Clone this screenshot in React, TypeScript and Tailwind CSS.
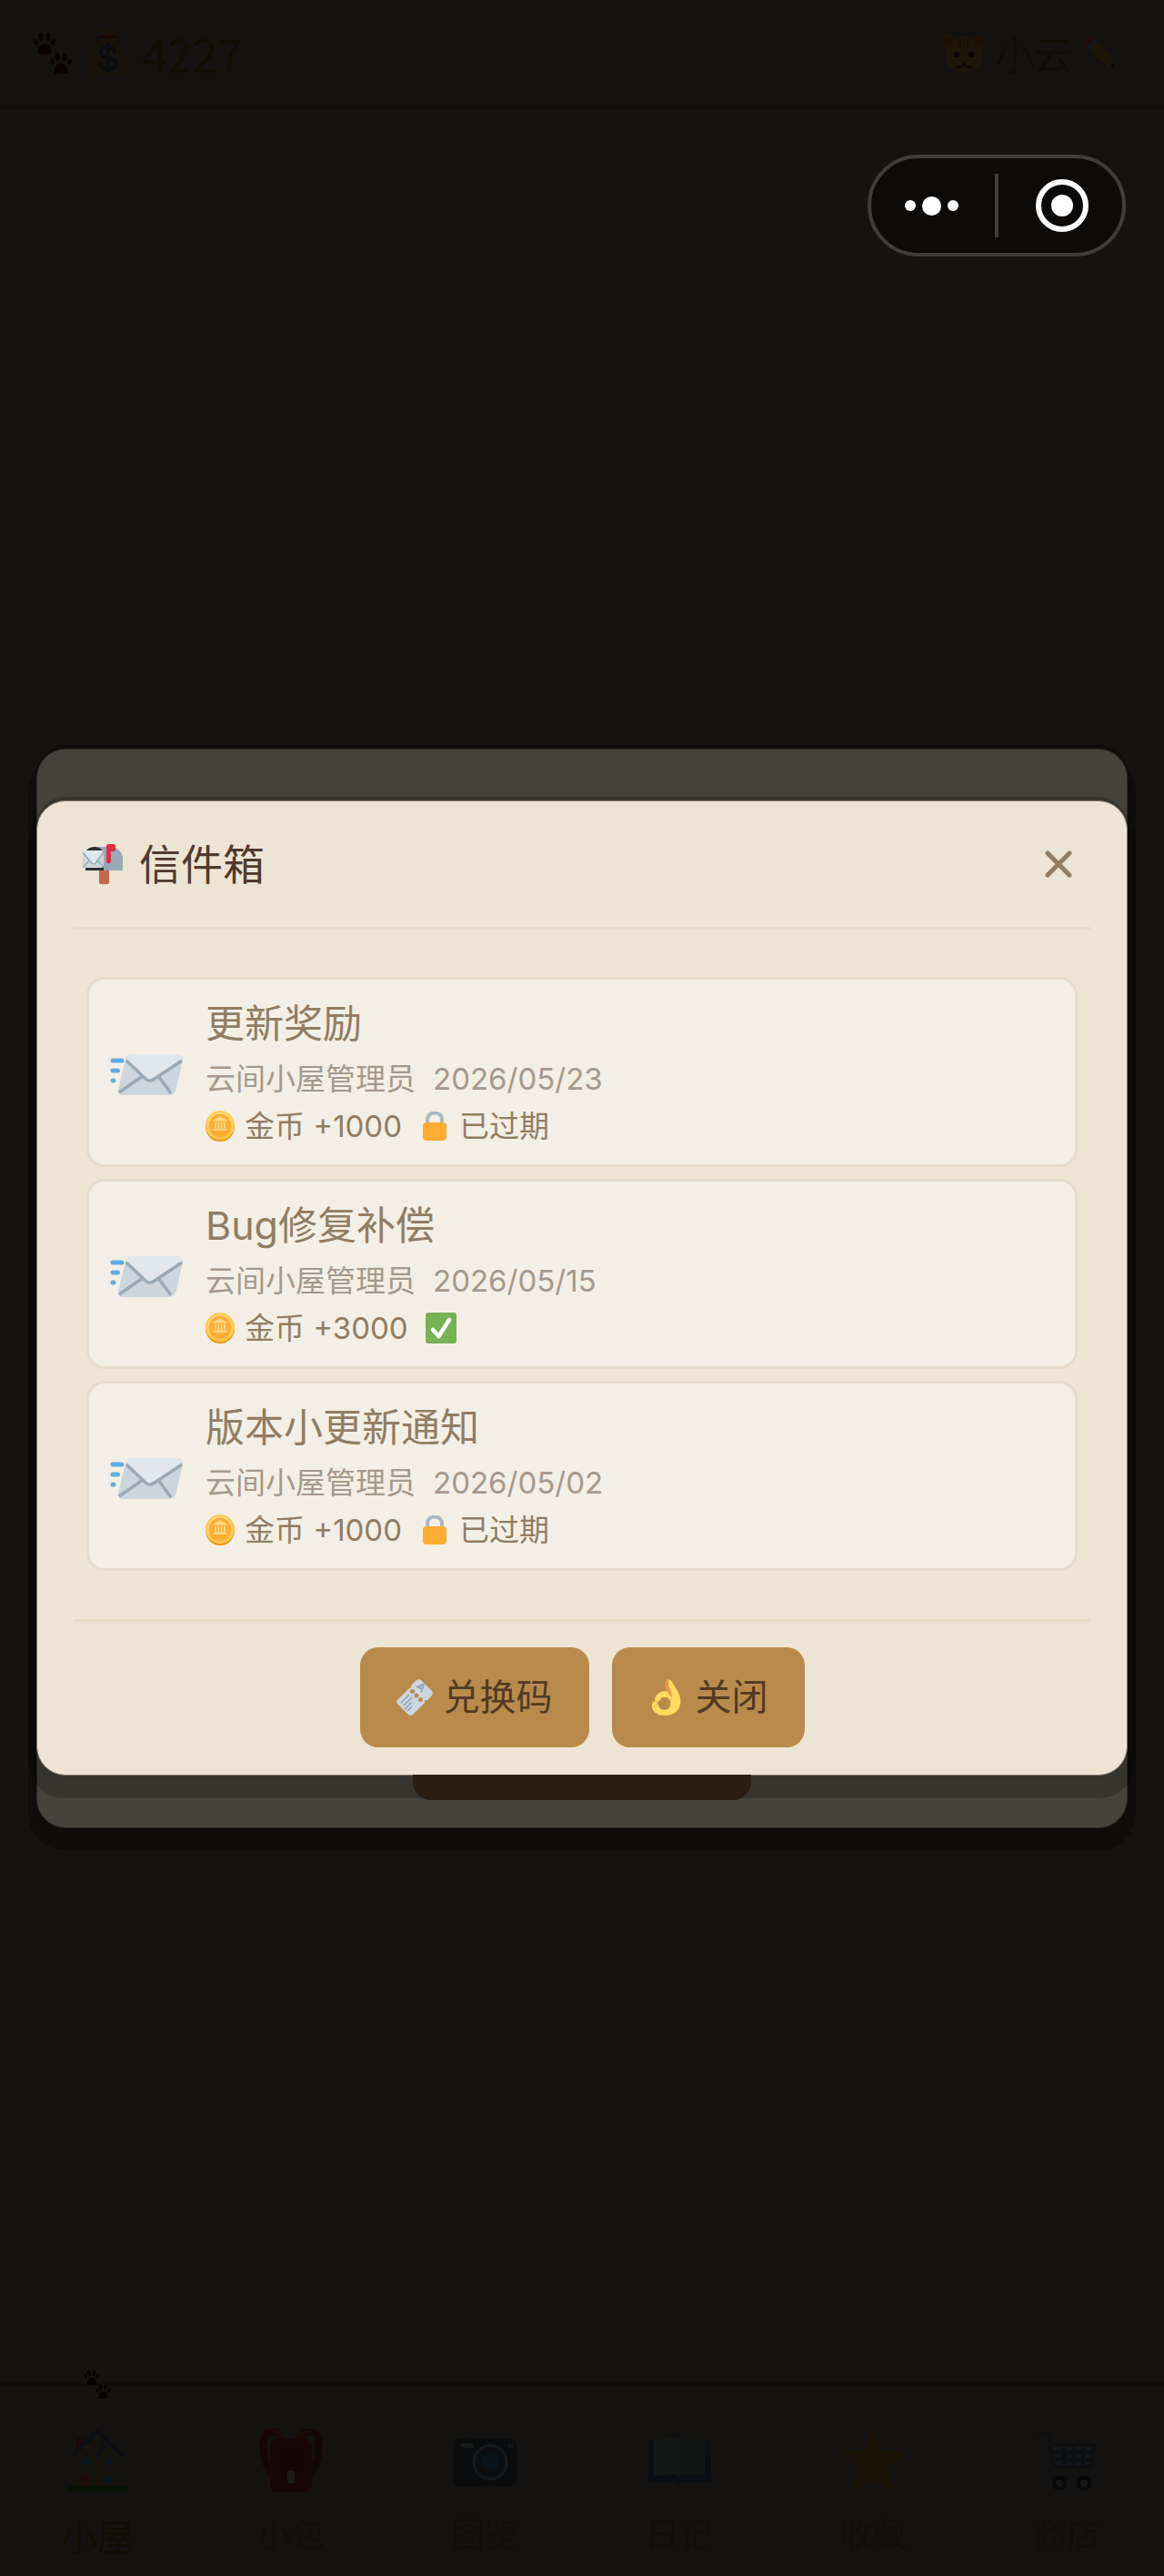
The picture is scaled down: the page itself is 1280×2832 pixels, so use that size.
import React from "react";

function Paws({ className }: { className: string }) {
  return (
    <svg viewBox="0 0 44 46" className={className} fill="currentColor" aria-hidden="true">
      {[
        [0, 0],
        [18, 22],
      ].map(([x, y]) => (
        <g key={x} transform={`translate(${x} ${y})`}>
          <ellipse cx="3.5" cy="11" rx="2.2" ry="3.2" transform="rotate(-15 3.5 11)" />
          <ellipse cx="9" cy="5.5" rx="2.7" ry="4.4" transform="rotate(-5 9 5.5)" />
          <ellipse cx="17" cy="5.5" rx="2.7" ry="4.4" transform="rotate(5 17 5.5)" />
          <ellipse cx="22.5" cy="11" rx="2.2" ry="3.2" transform="rotate(15 22.5 11)" />
          <path d="M6 24c-1-7 2-11 7-11s8 4 7 11c-2 1-12 1-14 0z" />
        </g>
      ))}
    </svg>
  );
}

function MoneyBag() {
  return (
    <svg viewBox="0 0 48 54" className="h-[54px] w-12" aria-hidden="true">
      <path d="M15 10 14 1l5 2 5-3 5 3 5-2-1 9c5 8 14 18 14 30 0 8-5 14-12 14H13C6 54 1 48 1 40 1 28 11 18 15 10z" fill="#17130a" />
      <path d="M15 8h19v3H15z" fill="#1a0907" />
      <path d="M24.500 18v29M32 26c-1-4-4-5-8-5-5 0-7 3-7 6 0 8 16 4 16 12 0 4-4 6-8 6-5 0-8-2-9-6" fill="none" stroke="#0a0d0d" strokeWidth="4" strokeLinecap="round" />
    </svg>
  );
}

function Cat() {
  return (
    <svg viewBox="0 0 44 44" className="size-11" aria-hidden="true">
      <path d="M1 0 14 6c5-2 11-2 16 0L43 0c1 8 1 14 0 20 2 13-8 24-21 24S-1 33 1 20C0 14 0 8 1 0z" fill="#1d1507" />
      <path d="M2 3 10 8l-6 7zM42 3l-8 5 6 7z" fill="#220e06" />
      <path d="M18 7v9M22 6v10M26 7v9" stroke="#160e05" strokeWidth="2" />
      <circle cx="14" cy="24" r="3" fill="#070503" />
      <circle cx="30" cy="24" r="3" fill="#070503" />
      <path d="M19 31h6l-3 3z" fill="#2c0a0a" />
      <path d="M13 37c4 2 7 1 9-3 2 4 5 5 9 3" fill="none" stroke="#0d0804" strokeWidth="2" />
    </svg>
  );
}

function Pencil() {
  return (
    <svg viewBox="0 0 34 34" className="size-[34px]" aria-hidden="true">
      <path d="m6 15 9-10 16 17-8 7z" fill="#1d1607" />
      <path d="M1 9C0 4 5-1 10 1l1 1-9 9z" fill="#230a0c" />
      <path d="m2 11 9-9 4 3-9 10z" fill="#12171a" />
      <path d="m23 29 8-7 2 11z" fill="#1e120d" />
      <path d="m29 31 3-3 1 5z" fill="#040404" />
    </svg>
  );
}

function Mailbox() {
  return (
    <svg viewBox="0 0 44 44" className="size-11" aria-hidden="true">
      <path d="M18 26h11v16c0 1-1 2-2 2h-7c-1 0-2-1-2-2z" fill="#c1694f" />
      <path d="M13 3h18c7 0 13 6 13 13v12c0 .6-.4 1-1 1H13z" fill="#99aab5" />
      <path d="M3 10C3 6 8 3 13 3s10 3 10 9v17H3z" fill="#292f33" />
      <path d="M0 7h20c2 0 3 1 3 2v15c0 1-1 2-3 2H2c-1 0-2 0-2-1z" fill="#ccd6dd" />
      <path d="m0 26 9-10M23 25l-9-9" stroke="#99aab5" strokeWidth="1.500" />
      <path d="M0 7h22l-8 13c-1 2-3 2-4 0L0 9z" fill="#e1e8ed" />
      <path d="m0 9 10 12c1 1 3 1 4 0l9-12" fill="none" stroke="#99aab5" strokeWidth="1.500" />
      <path d="M28 0h6c1 0 2 1 2 2v4c0 1-1 2-2 2h-3v11c0 3-5 3-5 0V2c0-1 1-2 2-2z" fill="#dd2e44" />
    </svg>
  );
}

function FlyingEnvelope() {
  return (
    <svg viewBox="0 -7 80 54" className="h-[54px] w-20 shrink-0" aria-hidden="true">
      <g stroke="#5dade4" strokeWidth="5" strokeLinecap="round">
        <path d="M3 7h10M3 18h5.500M3 29h1" />
      </g>
      <path d="M24 0h50c4 0 6 3 6 6l-7 31c-1 5-4 8-8 8H14c-4 0-6-3-5-7l8-32c1-4 4-6 7-6z" fill="#ccd6dd" />
      <path d="M10 42 36 24M67 43 53 24" stroke="#99aab5" strokeWidth="3.500" />
      <path d="M18 5c1-3 4-5 7-5h48c4 0 7 2 6 6L49 27c-3 3-6 3-9 0z" fill="#e1e8ed" />
      <path d="m18 7 20 19c4 4 7 4 11 1L79 7" fill="none" stroke="#99aab5" strokeWidth="3.500" />
    </svg>
  );
}

function Coin() {
  return (
    <svg viewBox="0 0 32 34" className="h-[34px] w-8" aria-hidden="true">
      <ellipse cx="16" cy="17.500" rx="16" ry="16.500" fill="#f4900c" />
      <ellipse cx="16" cy="16" rx="16" ry="16" fill="#ffcc4d" />
      <ellipse cx="16" cy="16" rx="13" ry="13.500" fill="#ffe8b6" />
      <ellipse cx="16" cy="16.500" rx="12.500" ry="13" fill="#ffac33" />
      <path d="M16 6.500 9 10v1.500h14V10zM10 12.500h2V19h-2zM13.500 12.500h1.700V19h-1.700zM16.800 12.500h1.700V19h-1.700zM20 12.500h2V19h-2zM9 19.500h14V22H9z" fill="#ffd983" />
    </svg>
  );
}

function Lock() {
  return (
    <svg viewBox="-4 0 30 32" className="h-8 w-[30px]" aria-hidden="true">
      <path d="M5 15V9c0-10 16-10 16 0v6" fill="none" stroke="#aab8c2" strokeWidth="4" />
      <rect y="12" width="26" height="20" rx="4" fill="#ffac33" />
    </svg>
  );
}

function Check() {
  return (
    <svg viewBox="0 0 34 34" className="size-[34px]" aria-label="已领取" role="img">
      <rect width="34" height="34" rx="3" fill="#77b255" />
      <path d="m8 19 6.500 7L26 8" fill="none" stroke="#fff" strokeWidth="4.500" strokeLinecap="round" strokeLinejoin="round" />
    </svg>
  );
}

function Ticket() {
  return (
    <svg viewBox="0 0 40 40" className="size-10" aria-hidden="true">
      <path d="m1 23 13-13c1-1 1 0 2 0 1-1 0-2 0-3l6-6c2-1 3-1 5 0l12 12c1 2 1 3 0 5l-5 5c-1 1-2 0-3 0-1 1 0 2 0 3L18 39c-2 1-4 1-5 0L1 27c-1-1-1-3 0-4z" fill="#ccd6dd" />
      <g fill="#b88b4c">
        <circle cx="17.500" cy="13.500" r="2.500" />
        <circle cx="22" cy="18" r="2.500" />
        <circle cx="26.500" cy="22.500" r="2.500" />
      </g>
      <path d="m5 26 9-9M8 29l9-9M9 33l8-8M12 35l5-5" stroke="#8fa6ba" strokeWidth="1.700" />
      <path d="m22 9 8-3.500-3 9M24 8l4.500 4" fill="none" stroke="#8fa6ba" strokeWidth="2" />
    </svg>
  );
}

function OkHand() {
  return (
    <svg viewBox="0 0 40 40" className="size-10" aria-hidden="true">
      <path d="M19 5c0-5 5-6 7-2l6 10c3 5 4 10 3 15-2 8-8 12-17 12C9 40 3 35 4 28c1-4 4-5 6-3l1 4c1 4 6 6 10 4 3-2 4-6 3-9-1-4-5-5-9-4-1 1-2 3-3 4-2 2-5 1-5-2 1-5 6-9 12-9l5 1z" fill="#ffdc5d" />
      <path d="M19 5c-1 6 2 10 7 16 0-4-1-8-3-12-1-3-1-5 0-8-2 0-4 2-4 4z" fill="#ef9645" />
      <path d="M5 25c2-2 5-1 5 1s-2 3-4 4" fill="none" stroke="#ef9645" strokeWidth="1" />
    </svg>
  );
}

function House() {
  return (
    <svg viewBox="0 0 64 68" className="h-[68px] w-16" aria-hidden="true">
      <path d="M9 10h6v16H9z" fill="#1f0408" />
      <path d="M6 30 32 3l26 27v32H6z" fill="#15130e" />
      <path d="M33 30v32" stroke="#1a1308" strokeWidth="2" />
      <path d="m5 28 27-26 27 26M44 15 32 28" fill="none" stroke="#0c0e14" strokeWidth="4.500" strokeLinecap="round" strokeLinejoin="round" />
      <path d="M15 31h9v8h-9zM41 31h8v8h-8zM41 50h8v8h-8z" fill="#0a141c" />
      <path d="M15 50h8v12h-8z" fill="#1d0d0a" />
      <rect y="62" width="64" height="6" rx="3" fill="#091207" />
    </svg>
  );
}

function Backpack() {
  return (
    <svg viewBox="0 0 70 70" className="size-[70px]" aria-hidden="true">
      <path d="M14 50C1 32 1 2 14 3c8 0 9 4 12 10M56 50C69 32 69 2 56 3c-8 0-9 4-12 10" fill="none" stroke="#140608" strokeWidth="8" />
      <path d="M16 2c8-3 13 2 15 10l-8 2C21 7 19 4 10 4zM54 2c-8-3-13 2-15 10l8 2c2-7 4-10 13-10z" fill="#190b08" />
      <rect x="12" y="11" width="46" height="59" rx="8" fill="#17050a" />
      <rect x="18" y="16" width="34" height="35" rx="4" fill="#150508" />
      <rect x="31" y="46" width="8" height="14" rx="2" fill="#1a1a18" />
    </svg>
  );
}

function Camera() {
  return (
    <svg viewBox="0 0 70 56" className="h-14 w-[70px]" aria-hidden="true">
      <path d="M8 5c0-3 2-4 4-4h8c3 0 4 1 4 4z" fill="#10110f" />
      <rect y="4" width="70" height="52" rx="7" fill="#0a0b0c" />
      <rect x="8" y="9" width="15" height="5" rx="2.500" fill="#161817" />
      <circle cx="63" cy="12" r="2.800" fill="#161817" />
      <ellipse cx="41" cy="30" rx="18" ry="18.500" fill="#0c0d0e" stroke="#161819" strokeWidth="3" />
      <circle cx="41" cy="30" r="10" fill="#081218" />
    </svg>
  );
}

function Book() {
  return (
    <svg viewBox="0 0 70 54" className="h-[54px] w-[70px]" aria-hidden="true">
      <path d="M0 10c0-3 2-5 5-5h60c3 0 5 2 5 5v36c0 3-2 5-5 5H39c-1 3-7 3-8 0H5c-3 0-5-2-5-5z" fill="#0a0e12" />
      <path d="M6 5c8 0 12-3 20-4 5 0 8 1 9 3v41c-5-4-9-3-28-1z" fill="#151716" />
      <path d="M64 5c-8 0-12-3-20-4-5 0-8 1-9 3v41c5-4 9-3 28-1z" fill="#121414" />
    </svg>
  );
}

function Star() {
  return (
    <svg viewBox="0 0 68 66" className="h-[66px] w-[68px]" aria-hidden="true">
      <path d="M34 3 43 24l22 1-17 16 6 22-20-11-20 11 6-22L3 25l22-1z" fill="#1a1204" stroke="#1a1204" strokeWidth="5" strokeLinejoin="round" />
    </svg>
  );
}

function Cart() {
  return (
    <svg viewBox="0 0 64 66" className="h-[66px] w-16" fill="none" aria-hidden="true">
      <path d="M17 16h45l-4 24H20z" fill="#151718" />
      <path d="M2 3h10l6 37M16 16h46l-4 24H17c-6 1-6 11 1 11h44M17 24h44M18 32h42M29 16l1 24M40 16v24M51 16l-2 24" stroke="#0d0f10" strokeWidth="4" strokeLinecap="round" />
      <circle cx="24" cy="58" r="6" stroke="#070809" strokeWidth="4" fill="#151718" />
      <circle cx="51" cy="58" r="6" stroke="#070809" strokeWidth="4" fill="#151718" />
    </svg>
  );
}

type Mail = { title: string; date: string; amount: number; state: "expired" | "claimed" };

const mails: Mail[] = [
  { title: "更新奖励", date: "2026/05/23", amount: 1000, state: "expired" },
  { title: "Bug修复补偿", date: "2026/05/15", amount: 3000, state: "claimed" },
  { title: "版本小更新通知", date: "2026/05/02", amount: 1000, state: "expired" },
];

const tabs = [
  { label: "小屋", icon: <House />, active: true },
  { label: "小包", icon: <Backpack /> },
  { label: "图鉴", icon: <Camera /> },
  { label: "日记", icon: <Book /> },
  { label: "收藏", icon: <Star /> },
  { label: "商店", icon: <Cart /> },
];

function MailRow({ mail }: { mail: Mail }) {
  return (
    <li>
      <button
        type="button"
        className="flex w-full items-center gap-[25px] rounded-[20px] border-3 border-[#e5dccd] bg-[#f4efe4] px-[23px] py-4 text-left"
      >
        <FlyingEnvelope />
        <span className="flex min-w-0 flex-col text-[33px] leading-[52px] text-[#907d64]">
          <span className="mb-[3px] text-[43px] leading-[64px]">{mail.title}</span>
          <span className="flex gap-[19px] text-[#a4998c]">
            <span>云间小屋管理员</span>
            <span>{mail.date}</span>
          </span>
          <span className="flex items-center">
            <Coin />
            <span className="ml-[11px]">金币 +{mail.amount}</span>
            <span className="ml-[19px] flex items-center gap-3.5">
              {mail.state === "expired" ? (
                <>
                  <Lock />
                  <span>已过期</span>
                </>
              ) : (
                <Check />
              )}
            </span>
          </span>
        </span>
      </button>
    </li>
  );
}

export default function App() {
  return (
    <div className="relative flex min-h-screen flex-col bg-[#141310] font-['Inter','Noto_Sans_CJK_SC',sans-serif]">
      <header className="flex h-[120px] items-center justify-between border-b-4 border-[#11100d] bg-[#131210] pr-[54px] pl-9 font-['Noto_Sans_CJK_SC',sans-serif]">
        <div className="flex items-center">
          <Paws className="h-[46px] w-11 text-[#0b0202]" />
          <span className="ml-3.5">
            <MoneyBag />
          </span>
          <span className="ml-3.5 text-[50px] text-[#100e03]">4227</span>
        </div>
        <button type="button" className="flex items-center gap-3 text-[43px] text-[#110c05]">
          <Cat />
          <span>小云</span>
          <Pencil />
        </button>
      </header>

      <main className="flex-1" />

      <nav className="grid grid-cols-6 border-t-4 border-[#100f0c] bg-[#131210] pt-11 pb-3">
        {tabs.map((tab) => (
          <a
            key={tab.label}
            href="#"
            aria-current={tab.active ? "page" : undefined}
            className={
              tab.active
                ? "relative flex flex-col items-center gap-[17px] text-[40px] text-[#100d04]"
                : "flex flex-col items-center gap-3.5 text-[37px] text-[#100f0d]"
            }
          >
            {tab.active && (
              <span className="absolute -top-[62px]">
                <Paws className="h-8 w-8 text-[#080202]" />
              </span>
            )}
            <span className="flex h-[76px] items-center">{tab.icon}</span>
            <span className="leading-[60px]">{tab.label}</span>
          </a>
        ))}
      </nav>

      <div className="absolute inset-0 grid items-center px-10">
        <div className="col-start-1 row-start-1 flex min-h-[1187px] flex-col items-center justify-end rounded-[32px] border border-[#2b2822] bg-[#46433d] pb-[30px] shadow-[0_15px_0_9px_#0e0d0b,0_-4px_0_0_#0e0d0b]" />

        <section
          role="dialog"
          aria-labelledby="mailbox-title"
          className="relative col-start-1 row-start-1 rounded-[32px] border border-[#85786a] bg-[#ede4d4] px-10 shadow-[0_16px_0_9px_rgba(0,0,0,0.22),0_-4px_0_0_rgba(0,0,0,0.22)]"
        >
          <header className="flex items-center justify-between border-b-3 border-[#e8dbc8] px-2.5 py-[34px]">
            <h2 id="mailbox-title" className="flex items-center gap-[18px] text-[46px] leading-[70px] text-[#4f3a2b]">
              <Mailbox />
              信件箱
            </h2>
            <button type="button" aria-label="关闭信件箱" className="p-2.5 text-[#907d64]">
              <svg viewBox="0 0 30 30" className="size-[30px]" aria-hidden="true">
                <path d="m3 3 24 24M27 3 3 27" stroke="currentColor" strokeWidth="5" strokeLinecap="round" />
              </svg>
            </button>
          </header>
          <ul className="flex flex-col gap-[13px] px-3.5 pt-[52px] pb-[53px]">
            {mails.map((mail) => (
              <MailRow key={mail.date} mail={mail} />
            ))}
          </ul>
          <footer className="flex justify-center gap-[25px] border-t-3 border-[#e8dbc6] pt-7 pb-[30px] text-[40px] leading-[60px] text-[#523a22]">
            <button type="button" className="flex items-center gap-3 rounded-[20px] bg-[#b88b4c] px-10 py-[25px]">
              <Ticket />
              兑换码
            </button>
            <button type="button" className="flex items-center gap-3 rounded-[20px] bg-[#b88b4c] px-10 py-[25px]">
              <OkHand />
              关闭
            </button>
          </footer>
          <div aria-hidden="true" className="absolute top-full left-1/2 h-7 w-[372px] -translate-x-1/2 rounded-b-[20px] bg-[#2a1e13]" />
        </section>
      </div>

      <div className="absolute top-[170px] right-[42px] flex h-28 w-[284px] items-center rounded-full border-4 border-[#3e3d3b] bg-[#0c0b0a] text-white">
        <button type="button" aria-label="更多" className="flex flex-1 items-center justify-center gap-[7px] pr-1">
          <span className="size-3 rounded-full bg-white" />
          <span className="size-[21px] rounded-full bg-white" />
          <span className="size-3 rounded-full bg-white" />
        </button>
        <span className="h-[70px] w-1 bg-[#3e3d3b]" />
        <button type="button" aria-label="退出" className="flex flex-1 items-center justify-center pl-1">
          <span className="grid size-[58px] place-items-center rounded-full border-6 border-white">
            <span className="size-6 rounded-full bg-white" />
          </span>
        </button>
      </div>
    </div>
  );
}
